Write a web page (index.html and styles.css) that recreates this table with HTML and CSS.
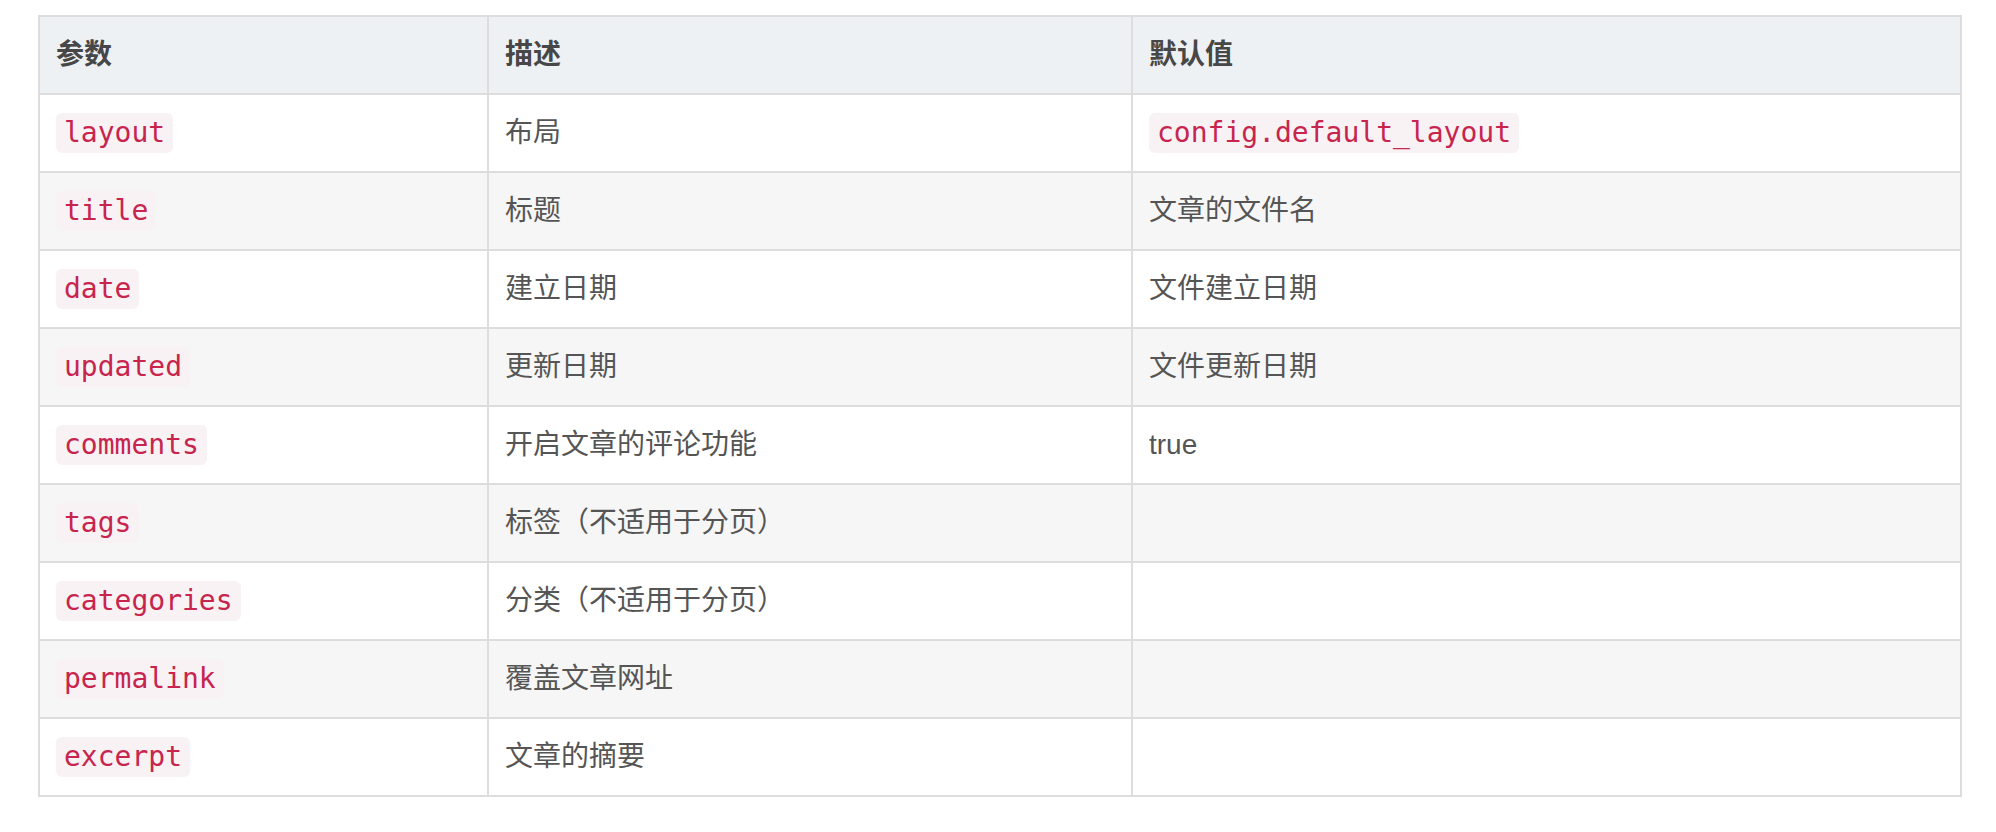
FILE: index.html
```html
<!DOCTYPE html>
<html lang="zh-CN">
<head>
<meta charset="utf-8">
<title>Front-matter 参数</title>
<link rel="stylesheet" href="styles.css">
</head>
<body>
<div class="table">
  <div class="row head">
    <div class="cell">参数</div>
    <div class="cell">描述</div>
    <div class="cell">默认值</div>
  </div>
  <div class="row">
    <div class="cell"><code>layout</code></div>
    <div class="cell">布局</div>
    <div class="cell"><code>config.default_layout</code></div>
  </div>
  <div class="row alt">
    <div class="cell"><code>title</code></div>
    <div class="cell">标题</div>
    <div class="cell">文章的文件名</div>
  </div>
  <div class="row">
    <div class="cell"><code>date</code></div>
    <div class="cell">建立日期</div>
    <div class="cell">文件建立日期</div>
  </div>
  <div class="row alt">
    <div class="cell"><code>updated</code></div>
    <div class="cell">更新日期</div>
    <div class="cell">文件更新日期</div>
  </div>
  <div class="row">
    <div class="cell"><code>comments</code></div>
    <div class="cell">开启文章的评论功能</div>
    <div class="cell">true</div>
  </div>
  <div class="row alt">
    <div class="cell"><code>tags</code></div>
    <div class="cell">标签（不适用于分页）</div>
    <div class="cell"></div>
  </div>
  <div class="row">
    <div class="cell"><code>categories</code></div>
    <div class="cell">分类（不适用于分页）</div>
    <div class="cell"></div>
  </div>
  <div class="row alt">
    <div class="cell"><code>permalink</code></div>
    <div class="cell">覆盖文章网址</div>
    <div class="cell"></div>
  </div>
  <div class="row">
    <div class="cell"><code>excerpt</code></div>
    <div class="cell">文章的摘要</div>
    <div class="cell"></div>
  </div>
</div>
</body>
</html>
```
FILE: styles.css
```css
html, body {
  margin: 0;
  background: #ffffff;
}

body {
  padding: 15px 34px 0 38px;
  font-family: "Liberation Sans", "Noto Sans CJK SC", sans-serif;
  font-size: 28px;
  color: #555555;
}

.table {
  width: 1924px;
  box-sizing: border-box;
  display: grid;
  grid-template-columns: 447px 642px 827px;
  grid-auto-rows: 76px;
  gap: 2px;
  padding: 2px;
  background: #dddddd;
}

.row {
  display: contents;
}

.cell {
  display: flex;
  align-items: center;
  padding: 0 16px;
  background: #ffffff;
  line-height: 40px;
  white-space: nowrap;
}

.row.alt .cell {
  background: #f6f6f6;
}

.row.head .cell {
  background: #eef1f4;
  font-weight: 700;
  color: #474747;
}

code {
  font-family: "DejaVu Sans Mono", monospace;
  font-size: 28px;
  line-height: 32px;
  padding: 4px 8px;
  border-radius: 6px;
  color: #c7254e;
  background: #f9f2f4;
}
```
